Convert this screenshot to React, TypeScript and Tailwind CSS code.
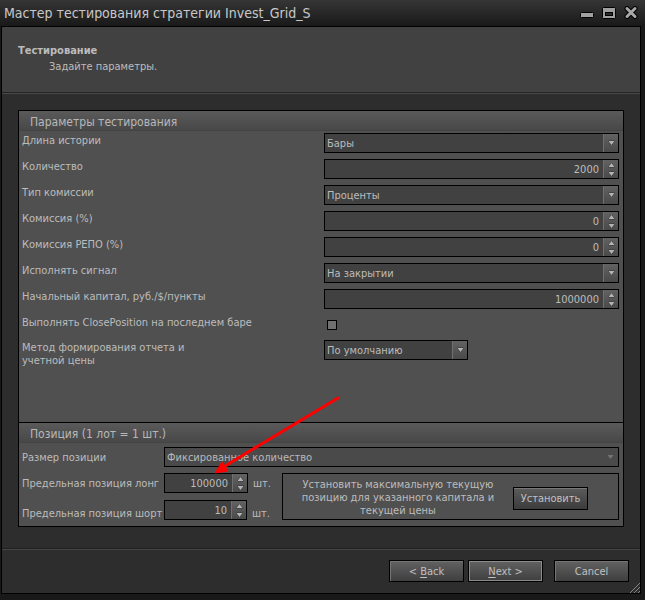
import { useState } from "react";
import type { ReactNode } from "react";

const fieldClasses = "h-5 border border-black bg-[#414141] text-[#bcbcbc]";
const spinClasses =
  "flex flex-1 items-center justify-center text-[#b4b4b4] hover:text-white";
const wizardButtonClasses =
  "h-[22px] w-[75px] border border-black bg-linear-to-b from-[#626262] to-[#3f3f3f] text-[#c0c0c0]";

function Triangle({ up = false, halo = "#333333" }: { up?: boolean; halo?: string }) {
  const d = up ? "M4.5 1 L7.5 5 H1.5 Z" : "M1.5 1 H7.5 L4.5 5 Z";

  return (
    <svg width="9" height="6" viewBox="0 0 9 6" aria-hidden="true">
      <path d={d} fill={halo} stroke={halo} strokeWidth="1" />
      <path d={d} fill="currentColor" />
    </svg>
  );
}

type SelectProps = {
  id: string;
  options: string[];
  className?: string;
  disabled?: boolean;
};

function SelectField({ id, options, className = "", disabled = false }: SelectProps) {
  return (
    <div className={`relative ${className}`}>
      <select
        id={id}
        disabled={disabled}
        className={`block w-full appearance-none pt-px pr-4 pl-[2px] leading-[17px] opacity-100 outline-none ${
          disabled ? "h-5 border border-black bg-[#4a4a4a] text-[#b8b8b8]" : fieldClasses
        }`}
      >
        {options.map((option) => (
          <option key={option}>{option}</option>
        ))}
      </select>
      <span
        className={`pointer-events-none absolute inset-y-px right-px flex w-[15px] items-center justify-center ${
          disabled
            ? "text-[#747474]"
            : "border-l border-[#707070] bg-linear-to-b from-[#626262] to-[#4a4a4a] text-[#b4b4b4]"
        }`}
      >
        <Triangle halo={disabled ? "#4a4a4a" : "#333333"} />
      </span>
    </div>
  );
}

type NumberProps = { id: string; initial: number; className?: string };

function NumberField({ id, initial, className = "" }: NumberProps) {
  const [value, setValue] = useState(initial);

  return (
    <div className={`flex ${fieldClasses} ${className}`}>
      <input
        id={id}
        type="text"
        inputMode="numeric"
        value={value}
        onChange={(e) => setValue(Number(e.target.value) || 0)}
        className="min-w-0 flex-1 bg-transparent pt-px pr-1 text-right leading-[17px] outline-none"
      />
      <div className="flex w-[15px] flex-col border-l border-[#707070] bg-linear-to-b from-[#626262] to-[#4a4a4a]">
        <button type="button" aria-label="+" className={spinClasses} onClick={() => setValue(value + 1)}>
          <Triangle up />
        </button>
        <button type="button" aria-label="-" className={spinClasses} onClick={() => setValue(value - 1)}>
          <Triangle />
        </button>
      </div>
    </div>
  );
}

function Row({ id, label, children }: { id: string; label: ReactNode; children: ReactNode }) {
  return (
    <div className="flex items-start">
      <label htmlFor={id} className="w-[302px] shrink-0 pt-px">
        {label}
      </label>
      {children}
    </div>
  );
}

function GroupTitle({ children }: { children: ReactNode }) {
  return (
    <h2 className="h-5 border-b border-[#444444] bg-linear-to-b from-[#5a5a5a] to-[#484848] pl-[11px] text-xs leading-[22px] text-[#b8b8b8]">
      {children}
    </h2>
  );
}

function TitleBar() {
  return (
    <header className="flex h-[26px] items-center justify-between bg-linear-to-b from-[#363636] to-[#191919] pr-[7px] pl-1">
      <h1 className="text-sm leading-5 text-[#c8c8c8]">
        Мастер тестирования стратегии Invest_Grid_S
      </h1>
      <div className="flex gap-2">
        <button type="button" aria-label="Свернуть">
          <svg width="14" height="14" viewBox="0 0 14 14">
            <rect x="0.5" y="6.5" width="13" height="5" rx="1" fill="#a0a0a0" stroke="#000" />
          </svg>
        </button>
        <button type="button" aria-label="Развернуть">
          <svg width="14" height="14" viewBox="0 0 14 14">
            <rect x="0.5" y="1.5" width="13" height="11" rx="1" fill="#a0a0a0" stroke="#000" />
            <rect x="3.5" y="6.5" width="7" height="3" fill="#2a2a2a" stroke="#000" />
          </svg>
        </button>
        <button type="button" aria-label="Закрыть">
          <svg width="14" height="14" viewBox="0 0 14 14">
            <path d="M3 2.5 L11 10.5 M11 2.5 L3 10.5" stroke="#000" strokeWidth="5" strokeLinecap="round" />
            <path d="M3 2.5 L11 10.5 M11 2.5 L3 10.5" stroke="#a8a8a8" strokeWidth="3" strokeLinecap="round" />
          </svg>
        </button>
      </div>
    </header>
  );
}

function TestParameters() {
  return (
    <section className="flex flex-1 flex-col">
      <GroupTitle>Параметры тестирования</GroupTitle>
      <div className="flex flex-col gap-1.5 pt-0.5 pr-1 pl-[3px]">
        <Row id="history" label="Длина истории">
          <SelectField id="history" options={["Бары", "Дни"]} className="flex-1" />
        </Row>
        <Row id="count" label="Количество">
          <NumberField id="count" initial={2000} className="flex-1" />
        </Row>
        <Row id="feeType" label="Тип комиссии">
          <SelectField id="feeType" options={["Проценты", "Пункты"]} className="flex-1" />
        </Row>
        <Row id="fee" label="Комиссия (%)">
          <NumberField id="fee" initial={0} className="flex-1" />
        </Row>
        <Row id="repo" label="Комиссия РЕПО (%)">
          <NumberField id="repo" initial={0} className="flex-1" />
        </Row>
        <Row id="signal" label="Исполнять сигнал">
          <SelectField id="signal" options={["На закрытии", "На открытии"]} className="flex-1" />
        </Row>
        <Row id="capital" label="Начальный капитал, руб./$/пункты">
          <NumberField id="capital" initial={1000000} className="flex-1" />
        </Row>
        <Row id="closeLast" label="Выполнять ClosePosition на последнем баре">
          <input
            id="closeLast"
            type="checkbox"
            className="mt-[5px] ml-[3px] size-2.5 appearance-none border border-black bg-[#707070] checked:bg-[#c0c0c0]"
          />
        </Row>
        <div className="pt-1">
          <Row
            id="method"
            label={
              <>
                Метод формирования отчета и
                <br />
                учетной цены
              </>
            }
          >
            <SelectField id="method" options={["По умолчанию"]} className="w-36" />
          </Row>
        </div>
      </div>
    </section>
  );
}

function PositionParameters() {
  return (
    <section className="relative border-t border-black">
      <GroupTitle>Позиция (1 лот = 1 шт.)</GroupTitle>
      <div className="flex flex-col gap-1.5 pt-1 pr-1 pb-1.5 pl-[3px]">
        <div className="flex items-center">
          <label htmlFor="size" className="w-[142px] shrink-0 pt-px">
            Размер позиции
          </label>
          <SelectField id="size" options={["Фиксированное количество"]} className="flex-1" disabled />
        </div>
        <div className="flex">
          <div className="flex w-[260px] shrink-0 flex-col justify-between whitespace-nowrap">
            <div className="flex items-center">
              <label htmlFor="maxLong" className="w-[142px] shrink-0 pt-px">
                Предельная позиция лонг
              </label>
              <NumberField id="maxLong" initial={100000} className="w-[84px]" />
              <span className="pt-px pl-[5px]">шт.</span>
            </div>
            <div className="flex items-end">
              <label htmlFor="maxShort" className="w-[142px] shrink-0">
                Предельная позиция шорт
              </label>
              <NumberField id="maxShort" initial={10} className="w-[83px]" />
              <span className="pl-[5px]">шт.</span>
            </div>
          </div>
          <div className="flex h-[47px] flex-1 items-center justify-between border border-black pr-[30px] pl-4">
            <p className="flex-1 pt-px text-center whitespace-nowrap">
              Установить максимальную текущую
              <br />
              позицию для указанного капитала и
              <br />
              текущей цены
            </p>
            <button
              type="button"
              className="mt-1 ml-4 h-[23px] w-[75px] border border-black bg-linear-to-b from-[#5c5c5c] to-[#3c3c3c] text-[#c0c0c0] inset-shadow-[0_1px_0_#787878]"
            >
              Установить
            </button>
          </div>
        </div>
      </div>
      {/* pointer to the long limit */}
      <svg
        width="128"
        height="80"
        viewBox="0 0 128 80"
        aria-hidden="true"
        className="pointer-events-none absolute -top-7 left-[194px]"
      >
        <path d="M125 3 L12 71" stroke="#ff0000" strokeWidth="3" strokeLinecap="round" />
        <path d="M2 78 L9 67 L15 76 Z" fill="#ff0000" stroke="#ff0000" />
      </svg>
    </section>
  );
}

export default function App() {
  return (
    <div className="flex min-h-screen flex-col bg-[#191919] font-['DejaVu_Sans_Condensed','DejaVu_Sans',sans-serif] text-[11px] leading-[13px] text-[#bcbcbc]">
      <TitleBar />
      <main className="mr-1 mb-1.5 ml-px flex flex-1 flex-col border border-black bg-[#2d2d2d]">
        <div className="h-[66px] border-b border-[#242424] bg-[#414141] pt-[17px] pl-4">
          <p className="font-bold">Тестирование</p>
          <p className="pt-[3px] pl-[31px]">Задайте параметры.</p>
        </div>
        <div className="flex flex-1 flex-col border-t border-[#484848] px-4 pt-4 pb-[21px]">
          <form className="flex flex-1 flex-col border border-black bg-[#505050]">
            <TestParameters />
            <PositionParameters />
          </form>
        </div>
        <footer className="relative border-t border-[#202020]">
          <div className="flex justify-end border-t border-[#454545] pt-2.5 pr-[11px] pb-[11px]">
            <button type="button" className={`mr-1 ${wizardButtonClasses} inset-shadow-[1px_1px_0_#747474]`}>
              &lt; <u className="underline-offset-2">B</u>ack
            </button>
            <button type="button" className={`mr-[11px] ${wizardButtonClasses} inset-shadow-[0_0_0_1px_#8c8c8c]`}>
              <u className="underline-offset-2">N</u>ext &gt;
            </button>
            <button type="button" className={`${wizardButtonClasses} inset-shadow-[1px_1px_0_#747474]`}>
              Cancel
            </button>
          </div>
          <svg width="10" height="10" viewBox="0 0 10 10" aria-hidden="true" className="absolute right-0 bottom-0">
            <path d="M0 10 L10 0 M4 10 L10 4 M8 10 L10 8" stroke="#858585" />
          </svg>
        </footer>
      </main>
    </div>
  );
}
